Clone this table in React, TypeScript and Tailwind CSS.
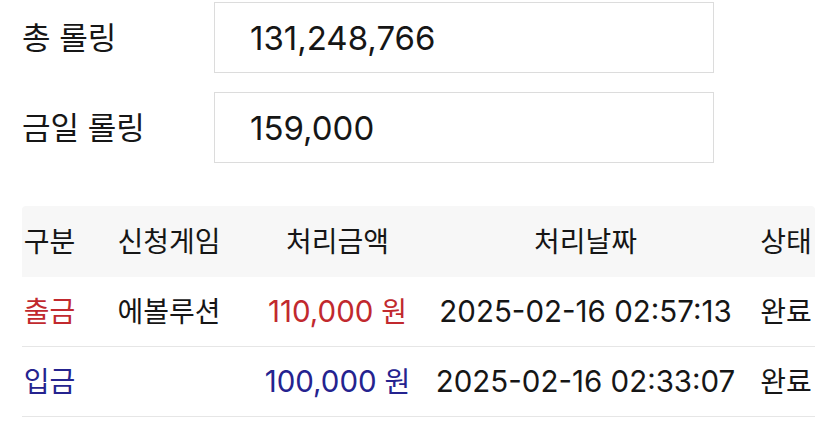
import React from "react";

type Row = {
  kind: "출금" | "입금";
  game: string;
  amount: string;
  date: string;
  status: string;
};

const rows: Row[] = [
  { kind: "출금", game: "에볼루션", amount: "110,000", date: "2025-02-16 02:57:13", status: "완료" },
  { kind: "입금", game: "", amount: "100,000", date: "2025-02-16 02:33:07", status: "완료" },
];

const cols = "grid grid-cols-[55px_184px_153px_343px_1fr] items-center text-center";

function Field({ label, value }: { label: string; value: string }) {
  return (
    <div className="flex items-center">
      <label className="w-[192px] text-[31px] leading-none text-[#161616]">{label}</label>
      <input
        readOnly
        value={value}
        className="w-[500px] h-[71px] border border-[#dcdcdc] bg-white pl-[35px] text-[33px] text-[#161616] outline-none"
      />
    </div>
  );
}

export default function App() {
  return (
    <div className="h-[438px] overflow-hidden bg-white pl-[22px] pt-[2px] font-['Inter','Noto_Sans_CJK_KR',sans-serif]">
      <div className="flex flex-col gap-[19px]">
        <Field label="총 롤링" value="131,248,766" />
        <Field label="금일 롤링" value="159,000" />
      </div>

      <div className="mt-[43px] w-[793px] text-[28px] text-[#161616]">
        <div className={`${cols} h-[71px] bg-[#f7f7f7] rounded-t-sm`}>
          <div>구분</div>
          <div>신청게임</div>
          <div>처리금액</div>
          <div>처리날짜</div>
          <div>상태</div>
        </div>
        {rows.map((r, i) => {
          const color = r.kind === "출금" ? "text-[#c1292e]" : "text-[#25238f]";
          return (
            <div key={i} className={`${cols} h-[70px] border-b border-[#e6e6e6]`}>
              <div className={color}>{r.kind}</div>
              <div>{r.game}</div>
              <div className={`${color} whitespace-nowrap`}>
                <span className="text-[29.5px]">{r.amount}</span> 원
              </div>
              <div className="whitespace-nowrap text-[29.5px]">{r.date}</div>
              <div>{r.status}</div>
            </div>
          );
        })}
        <div className="h-[70px]" />
      </div>
    </div>
  );
}
